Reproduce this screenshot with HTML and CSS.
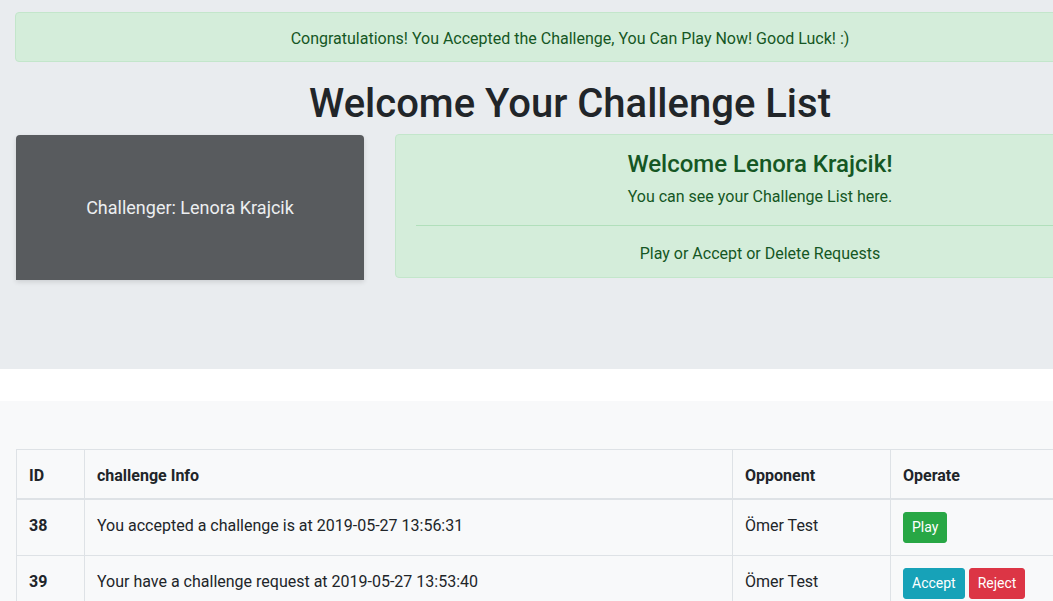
FILE: index.html
```html
<!DOCTYPE html>
<html lang="en">
<head>
<meta charset="utf-8">
<title>Challenge List</title>
<link rel="stylesheet" href="styles.css">
</head>
<body>
<div class="page">
  <section class="jumbotron">
    <div class="container">
      <div class="alert alert-top">Congratulations! You Accepted the Challenge, You Can Play Now! Good Luck! :)</div>
      <h1 class="title">Welcome Your Challenge List</h1>
      <div class="row">
        <div class="col-4">
          <div class="challenger-card">Challenger: Lenora Krajcik</div>
        </div>
        <div class="col-8">
          <div class="alert alert-info-box">
            <h4 class="alert-heading">Welcome Lenora Krajcik!</h4>
            <p class="lead-line">You can see your Challenge List here.</p>
            <hr class="divider">
            <p class="last-line">Play or Accept or Delete Requests</p>
          </div>
        </div>
      </div>
    </div>
  </section>
  <section class="list-section">
    <div class="container">
      <table class="table">
        <thead>
          <tr>
            <th class="c-id">ID</th>
            <th class="c-info">challenge Info</th>
            <th class="c-opp">Opponent</th>
            <th class="c-op">Operate</th>
          </tr>
        </thead>
        <tbody>
          <tr>
            <th>38</th>
            <td>You accepted a challenge is at 2019-05-27 13:56:31</td>
            <td>Ömer Test</td>
            <td class="op-cell"><button class="btn btn-play">Play</button></td>
          </tr>
          <tr>
            <th>39</th>
            <td>Your have a challenge request at 2019-05-27 13:53:40</td>
            <td>Ömer Test</td>
            <td class="op-cell"><button class="btn btn-accept">Accept</button> <button class="btn btn-reject">Reject</button></td>
          </tr>
        </tbody>
      </table>
    </div>
  </section>
</div>
</body>
</html>
```
FILE: styles.css
```css
html, body {
  margin: 0;
  padding: 0;
  overflow: hidden;
}
body {
  font-family: Roboto, "Liberation Sans", Arial, sans-serif;
  font-size: 16px;
  line-height: 1.5;
  color: #212529;
  background: #fff;
}
.page {
  width: 1140px;
}
.container {
  padding: 0 15px;
}
.jumbotron {
  background: #e9ecef;
  padding: 12px 0 75px;
  margin-bottom: 32px;
}
.alert {
  border: 1px solid #c3e6cb;
  background: #d4edda;
  color: #155724;
  border-radius: 4px;
  text-align: center;
}
.alert-top {
  padding: 14px 20px 10px;
  margin-bottom: 16px;
}
.title {
  margin: 0 0 6px;
  padding-top: 2px;
  font-size: 40px;
  font-weight: 500;
  line-height: 1.2;
  text-align: center;
  color: #212529;
}
.row {
  display: flex;
  margin: 0 -15px;
}
.col-4 {
  width: 380px;
  padding: 0 15px;
  box-sizing: border-box;
}
.col-8 {
  width: 760px;
  padding: 0 15px;
  box-sizing: border-box;
}
.challenger-card {
  margin-top: 1px;
  margin-left: 1px;
  width: 348px;
  height: 145px;
  background: #585b5e;
  color: #eceef0;
  border-radius: 4px 4px 0 0;
  box-shadow: 0 2px 5px rgba(0, 0, 0, 0.12);
  display: flex;
  align-items: center;
  justify-content: center;
  font-size: 18px;
}
.alert-info-box {
  padding: 13px 20px 11px;
  margin-bottom: 16px;
}
.alert-heading {
  margin: 0 0 6px;
  padding-top: 2px;
  font-size: 24px;
  font-weight: 500;
  line-height: 1.2;
  color: #155724;
}
.lead-line {
  margin: 0 0 16px;
}
.divider {
  margin: 0 0 16px;
  border: 0;
  border-top: 1px solid #b1dfbb;
}
.last-line {
  margin: 0;
}
.list-section {
  background: #f8f9fa;
  padding-top: 48px;
  min-height: 300px;
}
.table {
  width: 1111px;
  margin-left: 1px;
  border-collapse: collapse;
}
.table th, .table td {
  border: 1px solid #dee2e6;
  padding: 14px 12px 10px;
  text-align: left;
  vertical-align: top;
}
.table thead th {
  border-bottom: 2px solid #dee2e6;
}
.table td.op-cell {
  padding: 12px;
}
.c-id { width: 68px; box-sizing: border-box; }
.c-info { width: 648px; box-sizing: border-box; }
.c-opp { width: 158px; box-sizing: border-box; }
.btn {
  display: inline-block;
  font-family: inherit;
  font-size: 14px;
  line-height: 21px;
  padding: 4px 8px;
  border: 1px solid transparent;
  border-radius: 3px;
  color: #fff;
  cursor: pointer;
}
.btn-play { background: #28a745; border-color: #28a745; }
.btn-accept { background: #17a2b8; border-color: #17a2b8; }
.btn-reject { background: #dc3545; border-color: #dc3545; }
```
